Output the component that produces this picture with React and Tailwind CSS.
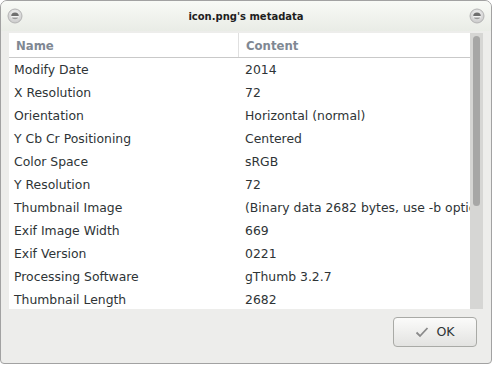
import React from "react";

const rows = [
	["Modify Date", "2014"],
	["X Resolution", "72"],
	["Orientation", "Horizontal (normal)"],
	["Y Cb Cr Positioning", "Centered"],
	["Color Space", "sRGB"],
	["Y Resolution", "72"],
	["Thumbnail Image", "(Binary data 2682 bytes, use -b option to extract)"],
	["Exif Image Width", "669"],
	["Exif Version", "0221"],
	["Processing Software", "gThumb 3.2.7"],
	["Thumbnail Length", "2682"],
];

const CloseButton = () => (
	<svg width="16" height="16" viewBox="0 0 16 16">
		<defs>
			<radialGradient id="cb" cx="50%" cy="35%" r="65%">
				<stop offset="0%" stopColor="#f4f4f4" />
				<stop offset="100%" stopColor="#c9c9c9" />
			</radialGradient>
		</defs>
		<circle cx="8" cy="8" r="7" fill="url(#cb)" stroke="#b4b4b4" strokeWidth="1" />
		<path d="M4.2 8.2 A3.8 3.6 0 0 1 11.8 8.2 Z" fill="#6f6f6f" />
		<rect x="4.2" y="8.2" width="7.6" height="1.3" fill="#ffffff" />
		<path d="M4.6 9.5 L11.4 9.5 A3.6 2.6 0 0 1 4.6 9.5 Z" fill="#9a9a9a" />
	</svg>
);

const App = () => {
	return (
		<div
			className="w-[492px] h-[366px] bg-white"
			style={{ fontFamily: "'DejaVu Sans', sans-serif" }}
		>
			<div className="h-[364px] border border-[#a2a2a2] rounded-t-[7px] rounded-b-[4px] bg-[#ededeb] flex flex-col overflow-hidden">
				{/* title bar */}
				<div className="h-[30px] shrink-0 flex items-center justify-between px-[6px] bg-gradient-to-b from-[#f8faf6] to-[#e9ece6]">
					<CloseButton />
					<span className="text-[10px] font-bold text-[#1e1e1e]">icon.png's metadata</span>
					<CloseButton />
				</div>

				{/* table */}
				<div className="mt-[2px] mx-[8px] h-[276px] flex bg-white overflow-hidden">
					<div className="flex-1 min-w-0 flex flex-col">
						<div className="h-[25px] shrink-0 flex border-b border-[#c9c9c9]">
							<div className="w-[230px] flex items-center pl-[7px] pt-[3px] border-r border-[#e0e0e0] text-[11.7px] font-bold text-[#7f8893]">
								Name
							</div>
							<div className="flex-1 flex items-center pl-[7px] pt-[3px] text-[11.7px] font-bold text-[#7f8893]">
								Content
							</div>
						</div>
						{rows.map(([name, value]) => (
							<div key={name} className="h-[23px] shrink-0 flex items-center pt-[2px] text-[12.4px] text-[#2e3436]">
								<div className="w-[231px] pl-[5px] whitespace-nowrap overflow-hidden">{name}</div>
								<div className="flex-1 min-w-0 pl-[5px] whitespace-nowrap overflow-hidden">{value}</div>
							</div>
						))}
					</div>
					<div className="w-[13px] shrink-0 bg-[#d6d6d4] pt-[3px] px-[3px]">
						<div className="h-[170px] rounded-full bg-[#a7a7a6]" />
					</div>
				</div>

				{/* buttons */}
				<div className="flex justify-end pt-[8px] pr-[14px]">
					<button className="w-[84px] h-[30px] rounded-[4px] border border-[#a9aaa6] bg-gradient-to-b from-[#fbfbfa] to-[#e3e3e1] flex items-center justify-center gap-[7px] text-[12.6px] text-[#2e3436]">
						<svg width="14" height="12" viewBox="0 0 14 12">
							<path d="M1.5 6.5 L5 10 L12.5 2" fill="none" stroke="#8a8a8a" strokeWidth="1.8" />
						</svg>
						<span>OK</span>
					</button>
				</div>
			</div>
		</div>
	);
};

export default App;
